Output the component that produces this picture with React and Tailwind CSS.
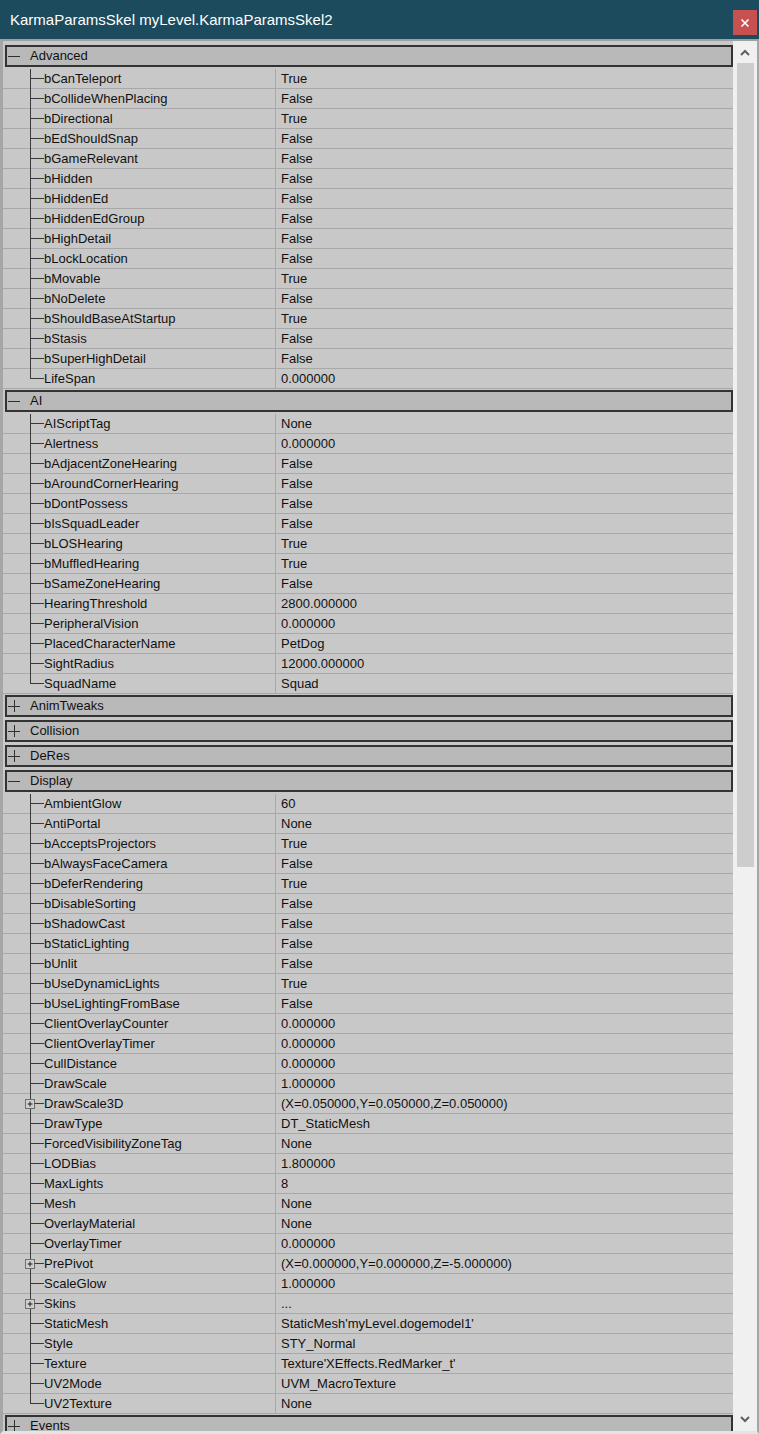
import React from 'react';

const groups = [
    {
        name: 'Advanced',
        open: true,
        rows: [
            ['bCanTeleport', 'True'],
            ['bCollideWhenPlacing', 'False'],
            ['bDirectional', 'True'],
            ['bEdShouldSnap', 'False'],
            ['bGameRelevant', 'False'],
            ['bHidden', 'False'],
            ['bHiddenEd', 'False'],
            ['bHiddenEdGroup', 'False'],
            ['bHighDetail', 'False'],
            ['bLockLocation', 'False'],
            ['bMovable', 'True'],
            ['bNoDelete', 'False'],
            ['bShouldBaseAtStartup', 'True'],
            ['bStasis', 'False'],
            ['bSuperHighDetail', 'False'],
            ['LifeSpan', '0.000000'],
        ],
    },
    {
        name: 'AI',
        open: true,
        rows: [
            ['AIScriptTag', 'None'],
            ['Alertness', '0.000000'],
            ['bAdjacentZoneHearing', 'False'],
            ['bAroundCornerHearing', 'False'],
            ['bDontPossess', 'False'],
            ['bIsSquadLeader', 'False'],
            ['bLOSHearing', 'True'],
            ['bMuffledHearing', 'True'],
            ['bSameZoneHearing', 'False'],
            ['HearingThreshold', '2800.000000'],
            ['PeripheralVision', '0.000000'],
            ['PlacedCharacterName', 'PetDog'],
            ['SightRadius', '12000.000000'],
            ['SquadName', 'Squad'],
        ],
    },
    { name: 'AnimTweaks', open: false, rows: [] },
    { name: 'Collision', open: false, rows: [] },
    { name: 'DeRes', open: false, rows: [] },
    {
        name: 'Display',
        open: true,
        rows: [
            ['AmbientGlow', '60'],
            ['AntiPortal', 'None'],
            ['bAcceptsProjectors', 'True'],
            ['bAlwaysFaceCamera', 'False'],
            ['bDeferRendering', 'True'],
            ['bDisableSorting', 'False'],
            ['bShadowCast', 'False'],
            ['bStaticLighting', 'False'],
            ['bUnlit', 'False'],
            ['bUseDynamicLights', 'True'],
            ['bUseLightingFromBase', 'False'],
            ['ClientOverlayCounter', '0.000000'],
            ['ClientOverlayTimer', '0.000000'],
            ['CullDistance', '0.000000'],
            ['DrawScale', '1.000000'],
            ['DrawScale3D', '(X=0.050000,Y=0.050000,Z=0.050000)', true],
            ['DrawType', 'DT_StaticMesh'],
            ['ForcedVisibilityZoneTag', 'None'],
            ['LODBias', '1.800000'],
            ['MaxLights', '8'],
            ['Mesh', 'None'],
            ['OverlayMaterial', 'None'],
            ['OverlayTimer', '0.000000'],
            ['PrePivot', '(X=0.000000,Y=0.000000,Z=-5.000000)', true],
            ['ScaleGlow', '1.000000'],
            ['Skins', '...', true],
            ['StaticMesh', "StaticMesh'myLevel.dogemodel1'"],
            ['Style', 'STY_Normal'],
            ['Texture', "Texture'XEffects.RedMarker_t'"],
            ['UV2Mode', 'UVM_MacroTexture'],
            ['UV2Texture', 'None'],
        ],
    },
    { name: 'Events', open: false, rows: [] },
];

// tree connector drawn in the left gutter of each property row
const Connector = ({ last, expandable }) => (
    <svg width="41" height="20" className="absolute left-0 top-0 overflow-visible">
        <line x1="0" y1="19.5" x2="41" y2="19.5" stroke="#a8a8a8" />
        {expandable ? (
            <>
                <line x1="27.5" y1="0" x2="27.5" y2="5" stroke="#3a3a3a" />
                {!last && <line x1="27.5" y1="14" x2="27.5" y2="20" stroke="#3a3a3a" />}
                <rect x="22.5" y="5.5" width="9" height="9" fill="#d0d0d0" stroke="#6e6e6e" />
                <line x1="24.5" y1="10" x2="29.5" y2="10" stroke="#1a1a1a" />
                <line x1="27" y1="7.5" x2="27" y2="12.5" stroke="#1a1a1a" />
                <line x1="31.5" y1="9.5" x2="41" y2="9.5" stroke="#3a3a3a" />
            </>
        ) : (
            <>
                <line x1="27.5" y1="0" x2="27.5" y2={last ? 10 : 20} stroke="#3a3a3a" />
                <line x1="27.5" y1="9.5" x2="41" y2="9.5" stroke="#3a3a3a" />
            </>
        )}
    </svg>
);

const Header = ({ name, open }) => (
    <div className="pt-[1px] pb-[2px] pl-[2px]">
        <div className="h-[22px] border-2 border-[#333333] bg-[#b9b9b9] flex items-center">
            <div className="w-[23px] shrink-0 flex items-center relative">
                <div className="ml-[1px] w-[12px] h-px bg-[#303030]" />
                {!open && <div className="absolute left-[7px] w-px h-[12px] bg-[#303030]" />}
            </div>
            <span className="text-[13px] text-[#111]">{name}</span>
        </div>
    </div>
);

const Row = ({ name, value, last, expandable }) => (
    <div className="flex h-[20px] border-b border-[#a8a8a8] text-[13px] text-[#111]">
        <div className="w-[41px] shrink-0 relative">
            <Connector last={last} expandable={expandable} />
        </div>
        <div className="w-[232px] shrink-0 border-r border-[#a8a8a8] leading-[19px] whitespace-nowrap overflow-hidden">
            {name}
        </div>
        <div className="flex-1 pl-[5px] leading-[19px] whitespace-nowrap overflow-hidden">{value}</div>
    </div>
);

export default function App() {
    return (
        <div
            className="w-[759px] h-[1434px] overflow-hidden flex flex-col bg-[#c8c8c8]"
            style={{ fontFamily: '"Liberation Sans", Arial, sans-serif' }}
        >
            {/* title bar */}
            <div className="h-[39px] shrink-0 bg-[#1c4b5e] flex items-start justify-between">
                <span className="text-white text-[15px] pl-[10px] pt-[9px]">
                    KarmaParamsSkel myLevel.KarmaParamsSkel2
                </span>
                <div className="mt-[10px] mr-[2px] w-[24px] h-[25px] bg-[#c75050] flex items-center justify-center">
                    <svg width="10" height="10" viewBox="0 0 10 10">
                        <path d="M1.5 1.5 L8.5 8.5 M8.5 1.5 L1.5 8.5" stroke="white" strokeWidth="1.6" />
                    </svg>
                </div>
            </div>

            <div className="flex-1 min-h-0 flex border-t-2 border-l-[3px] border-r-2 border-b-[3px] border-t-[#a0a0a0] border-l-[#a6a6a6] border-r-[#a6a6a6] border-b-[#e4e4e4]">
                <div className="w-[730px] pt-[3px] overflow-hidden">
                    {groups.map((g) => (
                        <div key={g.name}>
                            <Header name={g.name} open={g.open} />
                            {g.rows.map(([n, v, exp], i) => (
                                <Row key={n} name={n} value={v} expandable={exp} last={i === g.rows.length - 1} />
                            ))}
                        </div>
                    ))}
                </div>

                {/* scrollbar */}
                <div className="w-[24px] bg-[#f0f0f0] flex flex-col items-center">
                    <div className="h-[22px] flex items-center justify-center">
                        <svg width="10" height="7" viewBox="0 0 10 7">
                            <path d="M1 6 L5 2 L9 6" fill="none" stroke="#606060" strokeWidth="2" />
                        </svg>
                    </div>
                    <div className="w-[17px] h-[804px] bg-[#cdcdcd]" />
                    <div className="flex-1" />
                    <div className="h-[24px] flex items-center justify-center">
                        <svg width="10" height="7" viewBox="0 0 10 7">
                            <path d="M1 1 L5 5 L9 1" fill="none" stroke="#606060" strokeWidth="2" />
                        </svg>
                    </div>
                </div>
            </div>
        </div>
    );
}
